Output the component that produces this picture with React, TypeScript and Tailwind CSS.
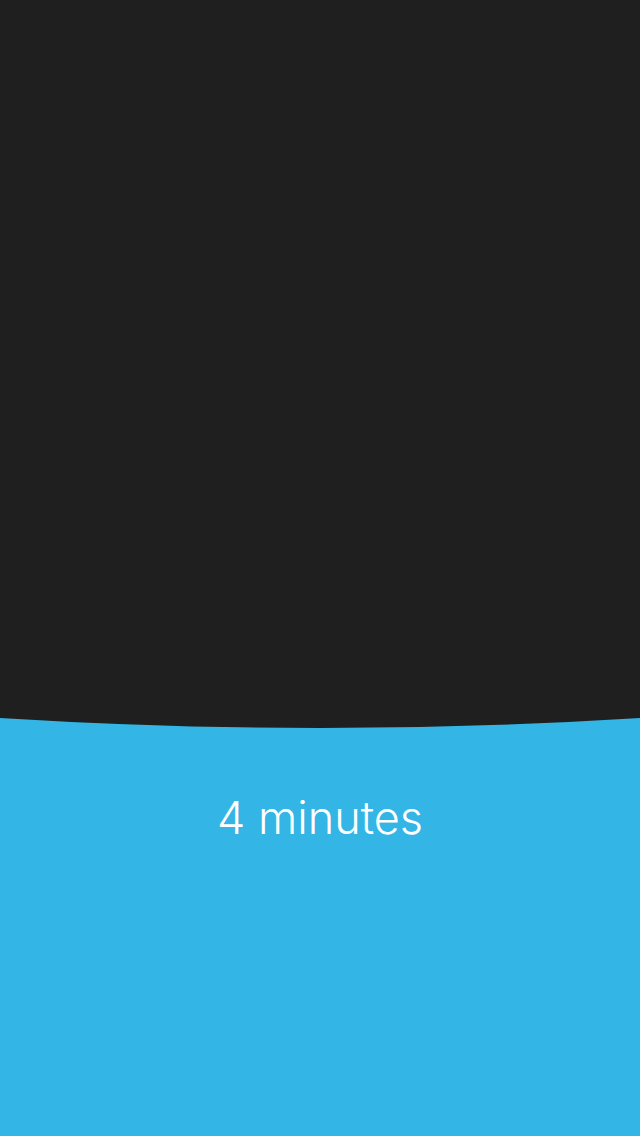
export default function App() {
  return (
    <main className="min-h-[1136px] w-full bg-[#33b5e5] flex flex-col" style={{ fontFamily: "Inter, 'Noto Sans', sans-serif" }}>
      <div className="h-[718px] bg-[#1f1f1f]" />
      <svg width="640" height="10" viewBox="0 0 640 10" preserveAspectRatio="none" className="block w-full h-[10px]">
        <path d="M0 0 L640 0 Q320 20 0 0 Z" fill="#1f1f1f" />
      </svg>
      <p className="mt-[67px] text-center text-white font-light text-[45px] leading-none">4 minutes</p>
    </main>
  );
}
